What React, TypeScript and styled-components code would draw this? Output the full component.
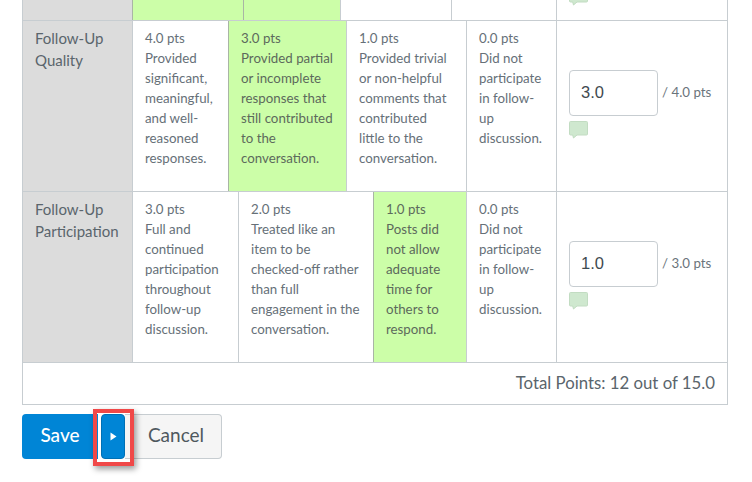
import React from 'react';
import styled, { createGlobalStyle } from 'styled-components';

const GlobalStyle = createGlobalStyle`
  html, body {
    margin: 0;
    padding: 0;
    background: #fff;
  }
  body {
    font-family: Lato, "Liberation Sans", sans-serif;
    color: #5f6b73;
  }
`;

const Page = styled.div`
  width: 752px;
  height: 482px;
  padding: 0 24px 0 22px;
  box-sizing: border-box;
  overflow: hidden;
`;

const Table = styled.div`
  width: 706px;
  border-left: 1px solid #c7cdd1;
  border-right: 1px solid #c7cdd1;
  border-bottom: 1px solid #c7cdd1;
  box-sizing: border-box;
`;

const Row = styled.div<{ $height: number }>`
  display: flex;
  height: ${(p) => p.$height}px;
  border-bottom: 1px solid #c7cdd1;
  box-sizing: border-box;
  overflow: hidden;
`;

const Criterion = styled.div`
  width: 109px;
  flex: none;
  background: #dcdcdc;
  padding: 6px 8px 0 12px;
  box-sizing: border-box;
  font-size: 15px;
  line-height: 22px;
  color: #5a656c;
`;

const Rating = styled.div<{ $width: number; $active?: boolean }>`
  width: ${(p) => p.$width}px;
  flex: none;
  box-sizing: border-box;
  padding: 7px 10px 0 12px;
  border-left: 1px solid ${(p) => (p.$active ? '#a9b5a5' : '#c7cdd1')};
  background: ${(p) => (p.$active ? '#ccfea8' : '#fff')};
  font-size: 13.3px;
  line-height: 20px;
  color: ${(p) => (p.$active ? '#5c6a5c' : '#667078')};
`;

const ScoreCell = styled.div`
  flex: 1;
  border-left: 1px solid #c7cdd1;
  box-sizing: border-box;
  padding: 49px 0 0 12px;
`;

const ClippedScore = styled(ScoreCell)`
  padding-top: 0;
`;

const ScoreLine = styled.div`
  display: flex;
  align-items: center;
  gap: 4px;
`;

const ScoreBox = styled.div`
  width: 89px;
  height: 46px;
  box-sizing: border-box;
  border: 1px solid #c7cdd1;
  border-radius: 4px;
  padding: 0 0 2px 11px;
  display: flex;
  align-items: center;
  font-family: "Liberation Sans", sans-serif;
  font-size: 16.5px;
  color: #3f4a50;
  background: #fff;
`;

const OutOf = styled.span`
  font-size: 13.3px;
  color: #6a747b;
  margin-bottom: 2px;
`;

const Comment = styled.svg`
  display: block;
  margin-top: 5px;
`;

const ClippedComment = styled(Comment)`
  margin-top: -12px;
`;

const TotalRow = styled.div`
  height: 41px;
  padding: 0 12px 2px 0;
  box-sizing: border-box;
  display: flex;
  align-items: center;
  justify-content: flex-end;
  font-size: 16.8px;
  color: #5a656c;
`;

const Actions = styled.div`
  position: relative;
  display: flex;
  margin-top: 9px;
  height: 46px;
`;

const SaveButton = styled.button`
  width: 76px;
  height: 45px;
  border: none;
  border-radius: 4px 0 0 4px;
  background: #0085d6;
  color: #fff;
  font: 500 19px Lato, "Liberation Sans", sans-serif;
  padding: 0 0 4px;
`;

const Gap = styled.div`
  width: 3px;
  height: 45px;
  background: #fff;
`;

const SplitButton = styled.button`
  width: 24px;
  height: 45px;
  border: 1px solid #0070b5;
  border-radius: 4px;
  background: #0085d6;
  padding: 0;
  display: flex;
  align-items: center;
  justify-content: center;
`;

const CancelButton = styled.button`
  width: 97px;
  height: 45px;
  box-sizing: border-box;
  border: 1px solid #c7cdd1;
  border-left: none;
  border-radius: 0 4px 4px 0;
  background: #f5f5f5;
  color: #4f585e;
  font: 400 19px Lato, "Liberation Sans", sans-serif;
  padding: 0 0 4px 6px;
`;

const Highlight = styled.div`
  position: absolute;
  left: 71px;
  top: -5px;
  width: 41px;
  height: 57px;
  box-sizing: border-box;
  border: 4px solid #f04848;
  box-shadow: 2px 3px 6px rgba(0, 0, 0, 0.4);
`;

function CommentIcon({ clipped }: { clipped?: boolean }) {
  const Icon = clipped ? ClippedComment : Comment;
  return (
    <Icon width="19" height="18" viewBox="0 0 19 18">
      <path
        d="M1.5 0.5h16a1 1 0 0 1 1 1v11.5a1 1 0 0 1-1 1H8l-3.5 3-0.8-3H1.5a1 1 0 0 1-1-1V1.5a1 1 0 0 1 1-1z"
        fill="#cfe8cf"
        stroke="#c2dcc2"
      />
    </Icon>
  );
}

export default function App() {
  return (
    <Page>
      <GlobalStyle />
      <Table>
        <Row $height={21}>
          <Criterion />
          <Rating $width={111} $active />
          <Rating $width={97} $active />
          <Rating $width={111} />
          <Rating $width={105} />
          <ClippedScore>
            <CommentIcon clipped />
          </ClippedScore>
        </Row>

        <Row $height={171}>
          <Criterion>Follow-Up Quality</Criterion>
          <Rating $width={96}>
            4.0 pts
            <br />
            Provided significant, meaningful, and well-reasoned responses.
          </Rating>
          <Rating $width={118} $active>
            3.0 pts
            <br />
            Provided partial or incomplete responses that still contributed to the conversation.
          </Rating>
          <Rating $width={120}>
            1.0 pts
            <br />
            Provided trivial or non-helpful comments that contributed
            <br />
            little to the conversation.
          </Rating>
          <Rating $width={90}>
            0.0 pts
            <br />
            Did not participate in follow-up discussion.
          </Rating>
          <ScoreCell>
            <ScoreLine>
              <ScoreBox>3.0</ScoreBox>
              <OutOf>/ 4.0 pts</OutOf>
            </ScoreLine>
            <CommentIcon />
          </ScoreCell>
        </Row>

        <Row $height={171}>
          <Criterion>Follow-Up Participation</Criterion>
          <Rating $width={106}>
            3.0 pts
            <br />
            Full and continued participation throughout follow-up discussion.
          </Rating>
          <Rating $width={135}>
            2.0 pts
            <br />
            Treated like an
            <br />
            item to be checked-off rather than full engagement in the conversation.
          </Rating>
          <Rating $width={93} $active>
            1.0 pts
            <br />
            Posts did not allow adequate time for others to respond.
          </Rating>
          <Rating $width={90}>
            0.0 pts
            <br />
            Did not participate in follow-up discussion.
          </Rating>
          <ScoreCell>
            <ScoreLine>
              <ScoreBox>1.0</ScoreBox>
              <OutOf>/ 3.0 pts</OutOf>
            </ScoreLine>
            <CommentIcon />
          </ScoreCell>
        </Row>

        <TotalRow>Total Points: 12 out of 15.0</TotalRow>
      </Table>

      <Actions>
        <SaveButton>Save</SaveButton>
        <Gap />
        <SplitButton>
          <svg width="7" height="9" viewBox="0 0 7 9">
            <path d="M0.5 0.5L6.5 4.5L0.5 8.5z" fill="#fff" />
          </svg>
        </SplitButton>
        <CancelButton>Cancel</CancelButton>
        <Highlight />
      </Actions>
    </Page>
  );
}
